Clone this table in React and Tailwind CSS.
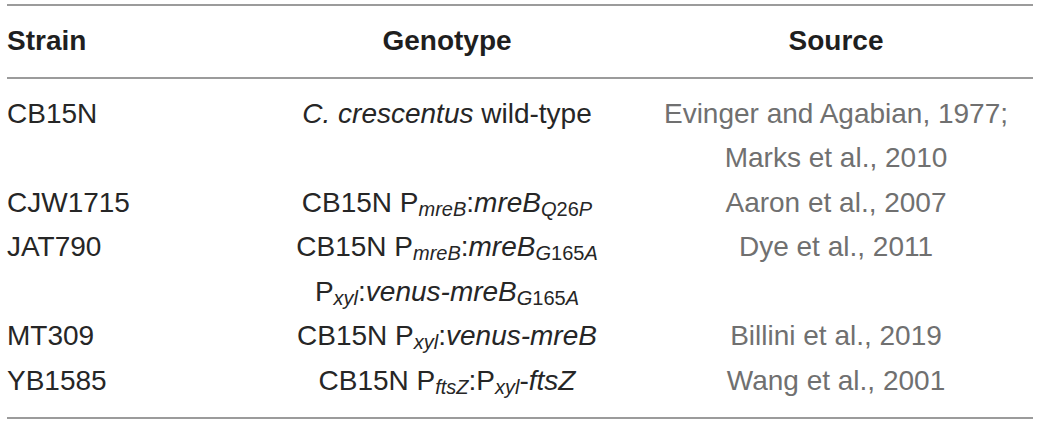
import React from 'react';

const Sub = ({ children }) => (
  <sub className="text-[20px] bottom-[-4px]">{children}</sub>
);

const rows = [
  {
    strain: 'CB15N',
    genotype: [<><i>C. crescentus</i> wild-type</>],
    source: ['Evinger and Agabian, 1977;', 'Marks et al., 2010'],
  },
  {
    strain: 'CJW1715',
    genotype: [
      <>CB15N P<Sub><i>mreB</i></Sub>:<i>mreB</i><Sub><i>Q</i>26<i>P</i></Sub></>,
    ],
    source: ['Aaron et al., 2007'],
  },
  {
    strain: 'JAT790',
    genotype: [
      <>CB15N P<Sub><i>mreB</i></Sub>:<i>mreB</i><Sub><i>G</i>165<i>A</i></Sub></>,
      <>P<Sub><i>xyl</i></Sub>:<i>venus-mreB</i><Sub><i>G</i>165<i>A</i></Sub></>,
    ],
    source: ['Dye et al., 2011'],
  },
  {
    strain: 'MT309',
    genotype: [<>CB15N P<Sub><i>xyl</i></Sub>:<i>venus-mreB</i></>],
    source: ['Billini et al., 2019'],
  },
  {
    strain: 'YB1585',
    genotype: [<>CB15N P<Sub><i>ftsZ</i></Sub>:P<Sub><i>xyl</i></Sub>-<i>ftsZ</i></>],
    source: ['Wang et al., 2001'],
  },
];

const cols = 'grid grid-cols-[248px_384px_1fr]';

export default function App() {
  return (
    <div className="w-[1040px] h-[422px] bg-white px-[7px] pt-[4px] font-['Liberation_Sans',Arial,sans-serif] text-[28px] leading-[44.5px] text-[#262626]">
      <div className="border-t-2 border-b-2 border-[#9b9b9b]">
        {/* header */}
        <div className={`${cols} pt-[13px] pb-[13px] border-b-2 border-[#9b9b9b] font-bold text-[#1f1f1f]`}>
          <div>Strain</div>
          <div className="text-center">Genotype</div>
          <div className="text-center">Source</div>
        </div>
        {/* body */}
        <div className="pt-[13px] pb-[14px]">
          {rows.map((r) => (
            <div key={r.strain} className={cols}>
              <div>{r.strain}</div>
              <div className="text-center whitespace-nowrap">
                {r.genotype.map((g, i) => (
                  <div key={i}>{g}</div>
                ))}
              </div>
              <div className="text-center text-[#707070] whitespace-nowrap">
                {r.source.map((s) => (
                  <div key={s}>{s}</div>
                ))}
              </div>
            </div>
          ))}
        </div>
      </div>
    </div>
  );
}
